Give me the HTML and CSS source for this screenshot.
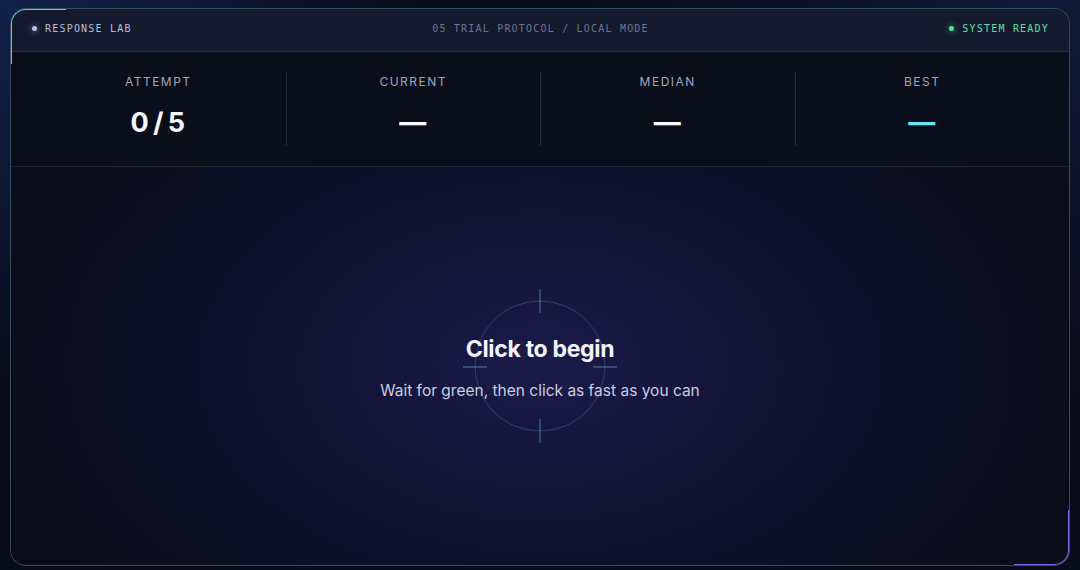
FILE: index.html
```html
<!DOCTYPE html>
<html lang="en">
<head>
  <meta charset="UTF-8" />
  <meta name="viewport" content="width=device-width, initial-scale=1" />
  <title>Response Lab</title>
  <link rel="stylesheet" href="styles.css">
</head>
<body>

  <div class="panel">
    <header class="topbar">
      <div class="brand"><span class="dot"></span>RESPONSE LAB</div>
      <div class="mode">05 TRIAL PROTOCOL / LOCAL MODE</div>
      <div class="status"><span class="dot dot-green"></span>SYSTEM READY</div>
    </header>

    <section class="stats">
      <div class="stat">
        <div class="stat-label">ATTEMPT</div>
        <div class="stat-value">0 / 5</div>
      </div>
      <div class="stat">
        <div class="stat-label">CURRENT</div>
        <div class="stat-value">—</div>
      </div>
      <div class="stat">
        <div class="stat-label">MEDIAN</div>
        <div class="stat-value">—</div>
      </div>
      <div class="stat">
        <div class="stat-label">BEST</div>
        <div class="stat-value best">—</div>
      </div>
    </section>

    <main class="arena">
      <svg class="reticle" width="160" height="160" viewBox="0 0 160 160">
        <circle cx="80" cy="80" r="65" fill="none" stroke="rgba(110,170,210,0.28)" stroke-width="1"/>
        <line x1="80" y1="3" x2="80" y2="27" stroke="#4d7f9c" stroke-width="1"/>
        <line x1="80" y1="133" x2="80" y2="157" stroke="#4d7f9c" stroke-width="1"/>
        <line x1="3" y1="81" x2="27" y2="81" stroke="#4d7f9c" stroke-width="1"/>
        <line x1="133" y1="81" x2="157" y2="81" stroke="#4d7f9c" stroke-width="1"/>
      </svg>
      <div class="prompt">
        <h1>Click to begin</h1>
        <p>Wait for green, then click as fast as you can</p>
      </div>
    </main>
  </div>

</body>
</html>
```

FILE: styles.css
```css
html, body {
  height: 100%;
}
body {
  margin: 0;
  padding: 8px 10px 0;
  box-sizing: border-box;
  font-family: Inter, 'Noto Sans', sans-serif;
  color: #eef0fa;
  background:
    radial-gradient(ellipse 420px 380px at 0 0, #13224a 0%, rgba(19,34,74,0) 100%),
    radial-gradient(ellipse 500px 400px at 1080px 0, #0f1a36 0%, rgba(15,26,54,0) 100%),
    #080c1a;
}
.panel {
  position: relative;
  height: 556px;
  border: 1px solid rgba(96, 160, 180, 0.45);
  border-radius: 16px;
  overflow: hidden;
  display: flex;
  flex-direction: column;
  background: #0a0d1a;
}
.panel::before,
.panel::after {
  content: '';
  position: absolute;
  width: 54px;
  height: 54px;
  pointer-events: none;
  z-index: 3;
}
.panel::before {
  top: -1px;
  left: -1px;
  border-top: 2px solid #5ccfdf;
  border-left: 2px solid #5ccfdf;
  border-top-left-radius: 16px;
}
.panel::after {
  bottom: -1px;
  right: -1px;
  border-bottom: 2px solid #7a68ee;
  border-right: 2px solid #7a68ee;
  border-bottom-right-radius: 16px;
}
.topbar {
  height: 43px;
  flex-shrink: 0;
  box-sizing: border-box;
  display: flex;
  align-items: center;
  justify-content: space-between;
  padding: 0 20px 3px 21px;
  background: #141a2d;
  border-bottom: 1px solid #252c42;
  font-family: 'DejaVu Sans Mono', 'Liberation Mono', monospace;
  font-size: 10px;
  letter-spacing: 1.2px;
}
.brand, .status {
  display: flex;
  align-items: center;
  gap: 8px;
}
.brand {
  color: #b9bfd6;
}
.mode {
  color: #6f7690;
}
.status {
  color: #5fe0a3;
}
.dot {
  width: 5px;
  height: 5px;
  border-radius: 50%;
  background: #b8c0e6;
  box-shadow: 0 0 6px rgba(184, 192, 230, 0.7);
}
.dot-green {
  background: #4ee59e;
  box-shadow: 0 0 6px rgba(78, 229, 158, 0.8);
}
.stats {
  height: 115px;
  flex-shrink: 0;
  box-sizing: border-box;
  display: grid;
  grid-template-columns: repeat(4, 1fr);
  padding: 20px 20px;
  background: #0a0d1a;
  border-bottom: 1px solid #1e2438;
}
.stat {
  display: flex;
  flex-direction: column;
  align-items: center;
  border-left: 1px solid #262c40;
}
.stat:first-child {
  border-left: none;
}
.stat-label {
  margin-top: 2px;
  font-size: 12px;
  letter-spacing: 1.5px;
  color: #a0a6be;
  line-height: 16px;
}
.stat-value {
  margin-top: 18px;
  font-size: 27px;
  font-weight: 700;
  color: #f6f7fc;
  line-height: 30px;
  letter-spacing: 1px;
  word-spacing: -4px;
}
.stat-value.best {
  color: #6ee7f5;
}
.arena {
  position: relative;
  flex: 1;
  display: flex;
  align-items: center;
  justify-content: center;
  background: radial-gradient(ellipse 560px 360px at 50% 50%, #1b1c4a 0%, #13153a 30%, #0c0f24 70%, #0a0c1a 100%);
}
.reticle {
  position: absolute;
  left: 50%;
  top: 50%;
  margin: -80px 0 0 -80px;
}
.prompt {
  position: relative;
  text-align: center;
  margin-top: 3px;
}
.prompt h1 {
  margin: 0;
  font-size: 23px;
  font-weight: 700;
  color: #f2f3fb;
  letter-spacing: -0.3px;
}
.prompt p {
  margin: 18px 0 0;
  font-size: 15.5px;
  color: #c9cde0;
}
```
